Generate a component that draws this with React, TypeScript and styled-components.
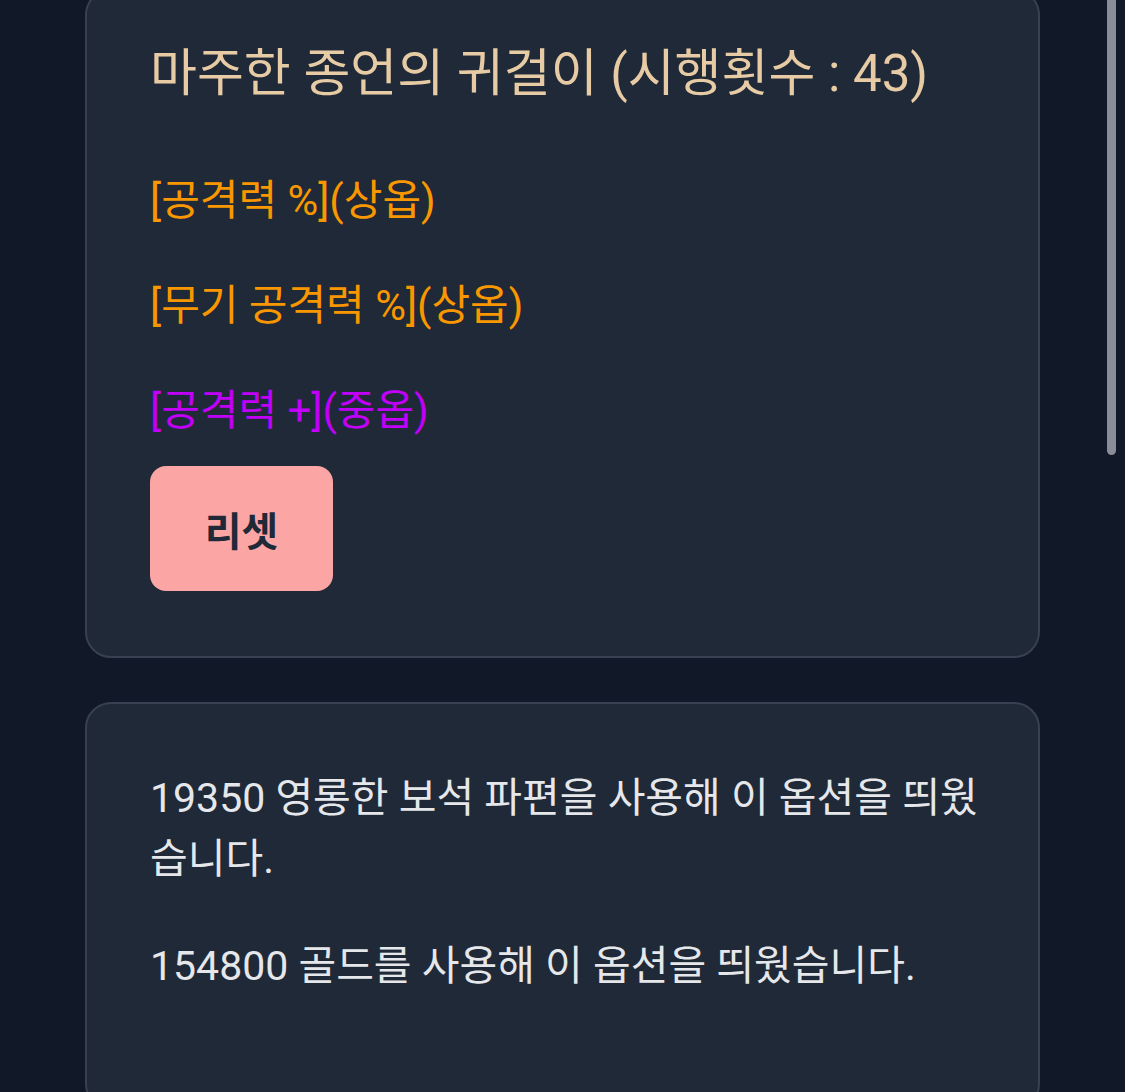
import React from "react";
import styled, { createGlobalStyle } from "styled-components";

const FONT = `Roboto, "Noto Sans CJK KR", "Noto Sans", sans-serif`;

const GlobalStyle = createGlobalStyle`
  html, body {
    margin: 0;
    padding: 0;
    background: #111827;
    overflow: hidden;
  }
  body {
    font-family: ${FONT};
    color: #e5e7eb;
  }
  * { box-sizing: border-box; }
`;

const Page = styled.main`
  display: flex;
  flex-direction: column;
  gap: 44px;
  margin-top: -11px;
  padding: 0 85px;
`;

const Card = styled.section<{ $padTop: number }>`
  background: #1f2937;
  border: 2px solid #374151;
  border-radius: 26px;
  padding: ${(p) => p.$padTop}px 40px 65px 63px;
  display: flex;
  flex-direction: column;
  align-items: flex-start;
`;

const Title = styled.h2`
  margin: 0 0 67px;
  font-size: 51px;
  line-height: 61.2px;
  font-weight: 400;
  color: #e7cba5;
`;

const OptionList = styled.div`
  display: flex;
  flex-direction: column;
  gap: 45px;
`;

const Option = styled.p<{ $color: string }>`
  margin: 0;
  font-size: 42px;
  line-height: 60px;
  color: ${(p) => p.$color};
`;

const ResetButton = styled.button`
  margin-top: 25px;
  width: 183px;
  height: 125px;
  border: none;
  border-radius: 16px;
  background: #fca5a5;
  color: #1f2937;
  font-family: ${FONT};
  font-size: 40px;
  font-weight: 700;
  display: flex;
  align-items: center;
  justify-content: center;
  padding: 0;
`;

const Message = styled.p`
  margin: 0 0 46px;
  font-size: 41px;
  line-height: 61px;
  color: #e5e7eb;
`;

const ScrollThumb = styled.div`
  position: fixed;
  top: -20px;
  right: 9px;
  width: 9px;
  height: 475px;
  border-radius: 5px;
  background: #8a8d97;
`;

const options = [
  { text: "[공격력 %](상옵)", color: "#f99700" },
  { text: "[무기 공격력 %](상옵)", color: "#f99700" },
  { text: "[공격력 +](중옵)", color: "#c000f9" },
];

export default function App() {
  return (
    <>
      <GlobalStyle />
      <Page>
        <Card $padTop={52}>
          <Title>마주한 종언의 귀걸이 (시행횟수 : 43)</Title>
          <OptionList>
            {options.map((o) => (
              <Option key={o.text} $color={o.color}>
                {o.text}
              </Option>
            ))}
          </OptionList>
          <ResetButton>리셋</ResetButton>
        </Card>
        <Card $padTop={64}>
          <Message>19350 영롱한 보석 파편을 사용해 이 옵션을 띄웠습니다.</Message>
          <Message>154800 골드를 사용해 이 옵션을 띄웠습니다.</Message>
        </Card>
      </Page>
      <ScrollThumb />
    </>
  );
}
